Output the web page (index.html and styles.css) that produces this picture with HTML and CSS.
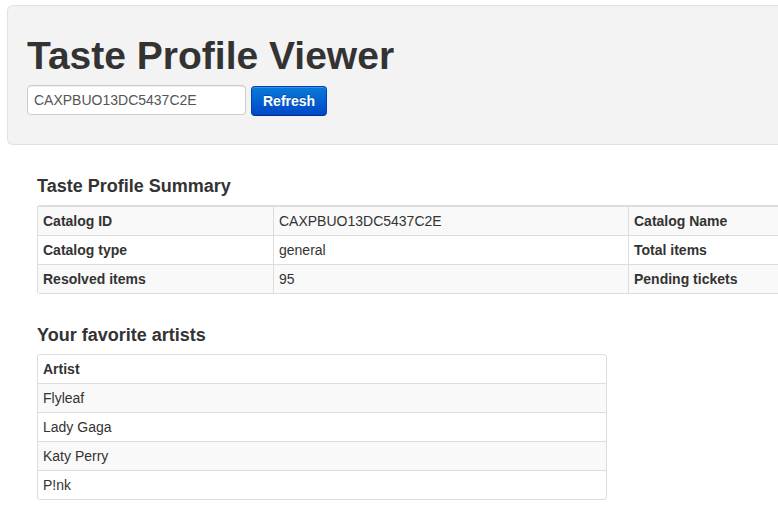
FILE: index.html
```
<!DOCTYPE html>
<html>
<head>
<meta charset="utf-8">
<title>Taste Profile Viewer</title>
<link rel="stylesheet" href="styles.css">
</head>
<body>
<div class="hero">
  <h1 class="hero-title">Taste Profile Viewer</h1>
  <form class="hero-form">
    <input class="id-input" type="text" value="CAXPBUO13DC5437C2E">
    <button class="btn-primary" type="button">Refresh</button>
  </form>
</div>
<div class="content">
  <h3 class="section-title">Taste Profile Summary</h3>
  <div class="table-clip">
    <table class="tbl tbl-summary">
      <colgroup><col class="c1"><col class="c2"><col class="c3"><col></colgroup>
      <tbody>
        <tr><th>Catalog ID</th><td>CAXPBUO13DC5437C2E</td><th>Catalog Name</th><td></td></tr>
        <tr><th>Catalog type</th><td>general</td><th>Total items</th><td></td></tr>
        <tr><th>Resolved items</th><td>95</td><th>Pending tickets</th><td></td></tr>
      </tbody>
    </table>
  </div>
  <h3 class="section-title">Your favorite artists</h3>
  <table class="tbl tbl-artists">
    <thead><tr><th>Artist</th></tr></thead>
    <tbody>
      <tr><td>Flyleaf</td></tr>
      <tr><td>Lady Gaga</td></tr>
      <tr><td>Katy Perry</td></tr>
      <tr><td>P!nk</td></tr>
    </tbody>
  </table>
</div>
</body>
</html>
```
FILE: styles.css
```
html, body {
  margin: 0;
  padding: 0;
  overflow: hidden;
  background: #fff;
}
body {
  font-family: "Liberation Sans", Arial, Helvetica, sans-serif;
  font-size: 14px;
  line-height: 20px;
  color: #333;
}
.hero {
  margin: 5px 0 0 7px;
  padding: 30px 19px 28px;
  background: #f3f3f3;
  border: 1px solid #e2e2e2;
  border-right: 0;
  border-radius: 6px 0 0 6px;
}
.hero-title {
  margin: 0 0 10px;
  font-size: 39px;
  line-height: 39px;
  font-weight: bold;
  color: #333;
}
.hero-form {
  display: flex;
  align-items: flex-start;
  gap: 5px;
  margin: 0;
}
.id-input {
  box-sizing: border-box;
  width: 219px;
  height: 30px;
  margin: 0;
  padding: 4px 6px;
  font-family: "Liberation Sans", Arial, sans-serif;
  font-size: 14px;
  color: #555;
  background: #fff;
  border: 1px solid #ccc;
  border-radius: 4px;
  box-shadow: inset 0 1px 1px rgba(0,0,0,0.075);
  outline: none;
}
.btn-primary {
  box-sizing: border-box;
  height: 30px;
  margin-top: 1px;
  padding: 0 11px;
  font-family: "Liberation Sans", Arial, sans-serif;
  font-size: 14px;
  font-weight: bold;
  color: #fff;
  text-shadow: 0 -1px 0 rgba(0,0,0,0.25);
  background: linear-gradient(to bottom, #0a7ad9, #0047c8);
  border: 1px solid #0040b5;
  border-bottom-color: #00318a;
  border-radius: 4px;
  box-shadow: inset 0 1px 0 rgba(255,255,255,0.2);
}
.content {
  padding: 31px 0 0 37px;
}
.section-title {
  margin: 0 0 9px;
  font-size: 18px;
  line-height: 20px;
  font-weight: bold;
  color: #333;
}
.table-clip {
  overflow: hidden;
  margin-bottom: 31px;
}
.tbl {
  border-collapse: separate;
  border-spacing: 0;
  border: 1px solid #ddd;
  border-left: 0;
  border-radius: 4px;
}
.tbl th, .tbl td {
  padding: 4px 5px;
  line-height: 20px;
  text-align: left;
  vertical-align: top;
  border-top: 1px solid #ddd;
  border-left: 1px solid #ddd;
}
.tbl th { font-weight: bold; }
.tbl tbody tr:nth-child(odd) > th,
.tbl tbody tr:nth-child(odd) > td {
  background: #f9f9f9;
}
.tbl thead tr:first-child th { border-top: 0; }
.tbl-summary {
  width: 960px;
}
.tbl-summary .c1 { width: 236px; }
.tbl-summary .c2 { width: 355px; }
.tbl-summary .c3 { width: 150px; }
.tbl-artists {
  width: 570px;
}
```
